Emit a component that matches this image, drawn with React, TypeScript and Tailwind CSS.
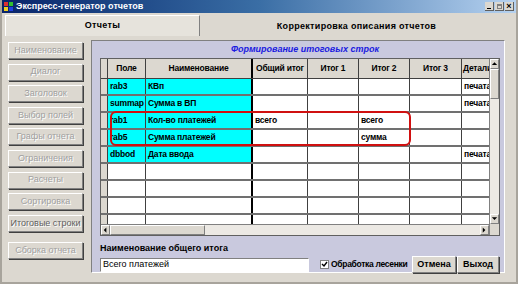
import React from "react";

const leftButtons = [
  "Наименование",
  "Диалог",
  "Заголовок",
  "Выбор полей",
  "Графы отчета",
  "Ограничения",
  "Расчеты",
  "Сортировка",
  "Итоговые строки",
];

const rows = [
  { f: "rab3", n: "КВп", t: "", i1: "", i2: "", i3: "", d: "печата" },
  { f: "summap", n: "Сумма в ВП", t: "", i1: "", i2: "", i3: "", d: "печата" },
  { f: "rab1", n: "Кол-во платежей", t: "всего", i1: "", i2: "всего", i3: "", d: "" },
  { f: "rab5", n: "Сумма платежей", t: "", i1: "", i2: "сумма", i3: "", d: "" },
  { f: "dbbod", n: "Дата ввода", t: "", i1: "", i2: "", i3: "", d: "печата" },
  null,
  null,
  null,
  null,
];

const cols = ["w-[38px]", "w-[107px]", "w-[55px]", "w-[51px]", "w-[51px]", "w-[52px]", "w-[29px]"];

function Btn({ label, active }: { label: string; active?: boolean }) {
  return (
    <div
      className={`h-[17px] w-[75px] shrink-0 flex items-center justify-center whitespace-nowrap bg-[#dcd8d0] border border-t-white border-l-white border-r-[#808080] border-b-[#808080] shadow-[1px_1px_0_#404040] text-[9px] [text-shadow:1px_1px_0_#fff] ${
        active ? "text-[#606060]" : "text-[#a0a0a0]"
      }`}
    >
      {label}
    </div>
  );
}

function Arrow({ dir }: { dir: "up" | "down" | "left" | "right" }) {
  const pts = {
    up: "1,5 4,2 7,5",
    down: "1,2 4,5 7,2",
    left: "5,1 2,4 5,7",
    right: "2,1 5,4 2,7",
  }[dir];
  return (
    <div className="w-[9px] h-[10px] shrink-0 flex items-center justify-center bg-[#dcd8d0] border border-t-white border-l-white border-r-[#808080] border-b-[#808080]">
      <svg width="8" height="8" viewBox="0 0 8 8">
        <polygon points={pts} fill="#000" />
      </svg>
    </div>
  );
}

export default function App() {
  return (
    <div className="w-[518px] h-[284px] bg-[#dcd8d0] flex flex-col overflow-hidden font-['Liberation_Sans',Arial,sans-serif] text-[9px] border-x-2 border-b-2 border-[#a8a49c]">
      {/* title bar */}
      <div className="h-[13px] shrink-0 flex items-center bg-gradient-to-r from-[#0a246a] via-[#3a6ea5] to-[#b6d2f0] px-[2px]">
        <svg width="9" height="9" viewBox="0 0 9 9" className="mr-[3px]">
          <rect x="0" y="0" width="4" height="4" fill="#e03030" />
          <rect x="5" y="0" width="4" height="4" fill="#30c030" />
          <rect x="0" y="5" width="4" height="4" fill="#f0d020" />
          <rect x="5" y="5" width="4" height="4" fill="#2040e0" />
        </svg>
        <span className="text-white font-bold text-[9px] leading-none">Экспресс-генератор отчетов</span>
        <div className="ml-auto flex gap-[1px]">
          <div className="w-[9px] h-[9px] bg-[#dcd8d0] border-r border-b border-[#606060] flex items-end justify-center pb-[1px]">
            <div className="w-[4px] h-[1px] bg-black" />
          </div>
          <div className="w-[9px] h-[9px] bg-[#dcd8d0] border-r border-b border-[#606060] flex items-center justify-center">
            <div className="w-[5px] h-[5px] border border-[#808080] border-t-2" />
          </div>
          <div className="w-[9px] h-[9px] bg-[#dcd8d0] border-r border-b border-[#606060] flex items-center justify-center text-[9px] font-bold leading-none">
            ×
          </div>
        </div>
      </div>

      {/* tabs */}
      <div className="h-[22px] shrink-0 flex items-end px-[3px] mt-[1px]">
        <div className="w-[195px] h-[21px] flex items-center justify-center bg-[#e6e3dc] border border-b-0 border-t-white border-l-white border-r-[#808080] text-[9px] font-bold tracking-[0.3px] text-black">
          Отчеты
        </div>
        <div className="flex-1 h-[19px] flex items-center justify-center text-[9px] font-bold tracking-[0.3px] text-black">
          Корректировка описания отчетов
        </div>
      </div>

      {/* body */}
      <div className="flex flex-1 pl-[6px] pr-[11px] pt-[4px]">
        <div className="w-[83px] shrink-0 flex flex-col gap-[4.6px] pt-[2px]">
          {leftButtons.map((b) => (
            <Btn key={b} label={b} active={b === "Итоговые строки"} />
          ))}
          <div className="mt-[6px]">
            <Btn label="Сборка отчета" />
          </div>
        </div>

        <div className="relative w-[414px] h-[233px] shrink-0 bg-[#c9c9de] border border-t-[#808080] border-l-[#808080] border-r-white border-b-white flex flex-col pl-[8px] pr-[4px]">
          <div className="h-[17px] shrink-0 flex items-center justify-center text-[#1a1ae0] italic font-bold text-[9px] pl-[10px]">
            Формирование итоговых строк
          </div>

          {/* grid */}
          <div className="flex h-[178px] shrink-0 bg-white border border-[#606060] text-[8.5px] tracking-[-0.2px]">
            <div className="flex-1 flex flex-col overflow-hidden">
              <div className="flex h-[20px] bg-[#dcd8d0] border-b border-[#404040] shrink-0">
                <div className="w-[7px] shrink-0 border-r border-[#404040]" />
                {["Поле", "Наименование", "Общий итог", "Итог 1", "Итог 2", "Итог 3", "Детали"].map((h, i) => (
                  <div
                    key={h}
                    className={`${cols[i]} shrink-0 flex items-center ${i === 6 ? "justify-start pl-[1px]" : "justify-center"} font-bold overflow-hidden whitespace-nowrap ${
                      i === 1 ? "border-r-2 border-black" : "border-r border-[#404040]"
                    }`}
                  >
                    {h}
                  </div>
                ))}
              </div>
              <div className="flex-1 overflow-hidden">
                {rows.map((r, k) => (
                  <div key={k} className="flex h-[17px] border-b-2 border-[#707070]">
                    <div className="w-[7px] shrink-0 bg-[#dcd8d0] border-r border-[#404040]" />
                    {[r?.f, r?.n, r?.t, r?.i1, r?.i2, r?.i3, r?.d].map((v, i) => (
                      <div
                        key={i}
                        className={`${cols[i]} shrink-0 flex items-center pl-[2px] font-bold overflow-hidden whitespace-nowrap ${
                          r && i < 2 ? "bg-[#00ffff]" : ""
                        } ${i === 1 ? "border-r-2 border-black" : "border-r border-[#404040]"}`}
                      >
                        {v}
                      </div>
                    ))}
                  </div>
                ))}
              </div>
              <div className="h-[11px] shrink-0 flex items-center bg-[#ece9e4] border-t border-[#808080]">
                <Arrow dir="left" />
                <div className="w-[95px] h-[10px] bg-[#dcd8d0] border border-t-white border-l-white border-r-[#808080] border-b-[#808080]" />
                <div className="flex-1" />
                <Arrow dir="right" />
              </div>
            </div>
            <div className="w-[10px] shrink-0 flex flex-col bg-[#ece9e4] border-l border-[#808080]">
              <Arrow dir="up" />
              <div className="h-[30px] bg-[#dcd8d0] border border-t-white border-l-white border-r-[#808080] border-b-[#808080]" />
              <div className="flex-1" />
              <Arrow dir="down" />
              <div className="h-[11px] bg-[#dcd8d0]" />
            </div>
          </div>

          {/* bottom */}
          <div className="mt-[8px] font-bold text-[9px] leading-none whitespace-nowrap">Наименование общего итога</div>
          <div className="flex items-center mt-[3px]">
            <div className="w-[209px] h-[14px] shrink-0 bg-white border border-t-[#808080] border-l-[#808080] border-r-white border-b-white flex items-center pl-[2px] text-[9px]">
              Всего платежей
            </div>
            <div className="flex items-center ml-[11px] whitespace-nowrap">
              <div className="w-[9px] h-[9px] bg-white border border-[#808080] flex items-center justify-center">
                <svg width="7" height="7" viewBox="0 0 7 7">
                  <polyline points="1,3 3,5 6,1" fill="none" stroke="#000" strokeWidth="1.4" />
                </svg>
              </div>
              <span className="ml-[2px] font-bold text-[8.5px] tracking-[-0.3px]">Обработка лесенки</span>
            </div>
            <div className="ml-auto flex gap-[1px] mr-[1px]">
              <div className="w-[44px] h-[17px] flex items-center justify-center bg-[#dcd8d0] border border-t-white border-l-white border-r-[#808080] border-b-[#808080] shadow-[1px_1px_0_#404040] font-bold text-[9px]">
                Отмена
              </div>
              <div className="w-[42px] h-[17px] flex items-center justify-center bg-[#dcd8d0] border border-t-white border-l-white border-r-[#808080] border-b-[#808080] shadow-[1px_1px_0_#404040] font-bold text-[9px]">
                Выход
              </div>
            </div>
          </div>

          {/* highlight */}
          <div className="absolute left-[18px] top-[70px] w-[301px] h-[35px] border-2 border-[#d01010] rounded-[6px] pointer-events-none" />
        </div>
      </div>
    </div>
  );
}
